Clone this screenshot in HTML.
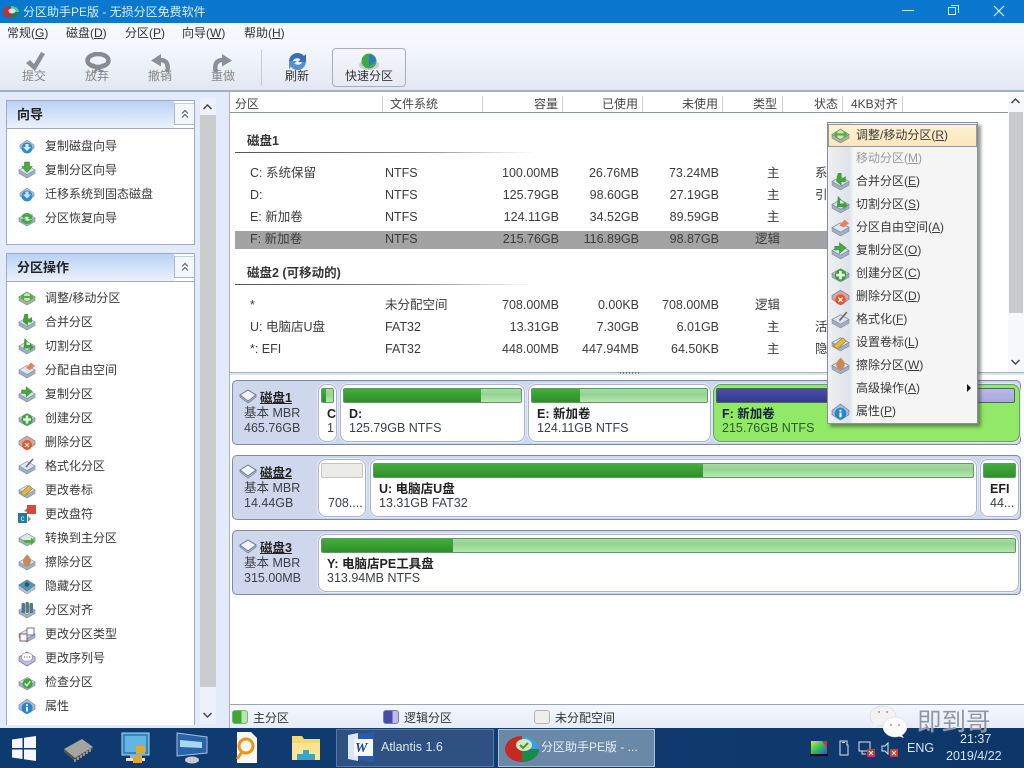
<!DOCTYPE html>
<html lang="zh"><head><meta charset="utf-8"><title>分区助手PE版</title>
<style>
html,body{margin:0;padding:0}
body{width:1024px;height:768px;overflow:hidden;position:relative;background:#e3eaf8;font:12px/16px "Liberation Sans","Noto Sans CJK SC",sans-serif;color:#333}
div,span,svg{position:absolute;box-sizing:border-box}
u{text-decoration:underline}
.t{white-space:nowrap}
.m{top:25px;height:16px;white-space:nowrap;color:#333}
.tb{top:68px;width:60px;text-align:center;color:#858585}
.p{left:6px;width:189px;background:#fff;border:1px solid #9fabc4}
.h{left:0;top:0;height:28px;width:167px;background:linear-gradient(#b9d1f5,#eef3fb);font-weight:bold;line-height:28px;padding-left:10px;color:#222;font-size:13px}
.hl{left:0;right:0;top:27px;height:1px;background:#9fabc4}
.b{left:167px;top:2px;width:20px;height:22px;background:#f3f7fd;border:1px solid #aab6cc;border-top-color:#c4cfe0;border-right:0}
.it{left:11px;height:24px;line-height:24px;padding-left:27px;white-space:nowrap;width:170px;color:#3a3a3a}
.it svg,.mi svg{left:0;top:3px;width:18px;height:18px}
.hd{top:96px;height:16px;white-space:nowrap;color:#444}
.sp{top:96px;width:1px;height:16px;background:#cdd3dd}
.r{white-space:nowrap;height:16px;color:#3c3c3c;font-size:12.5px}
.ra{text-align:right;width:90px}
.sh{left:247px;font-weight:bold;white-space:nowrap;font-size:12.5px;color:#333}
.ln{left:235px;width:300px;height:1px;background:linear-gradient(90deg,#555,#888 60%,#fff)}
.dk{left:232px;width:789px;height:65px;background:#ced7ec;border:1px solid #7f8ba0;border-radius:5px}
.pt{top:3px;height:58px;background:#fff;border:1px solid #aab4d2;border-radius:8px;box-shadow:0 0 0 1px #e4e9f6;overflow:hidden;white-space:nowrap}
.bar{left:2px;top:3px;height:15px;background:linear-gradient(#a5dca0,#96d292 40%,#b7e8b0);border:1px solid #5f9a60;border-radius:2px;overflow:hidden}
.fill{left:0;top:0;height:13px;background:linear-gradient(#43ad3d,#2f8f2b)}
.lb{white-space:nowrap;font-size:12.5px;color:#3c4048}
.lbb{white-space:nowrap;font-weight:bold;font-size:12.5px;color:#222}
.mi{left:0;width:148px;height:23px;line-height:23px;padding-left:28px;white-space:nowrap;color:#3a3a3a}
.mi svg{left:3px;top:2px;width:19px;height:19px}
.tk{top:728px}
</style></head><body>
<svg width="0" height="0" style="left:0;top:0">
<defs>
<g id="d"><path d="M1 9v3.500L9 17l8-4.500V9z" fill="#a3b0c4" stroke="#7c8ba3" stroke-width=".6"/><path d="M1 9l8-4.500L17 9l-8 4.500z" fill="#dde5f1" stroke="#7c8ba3" stroke-width=".7"/></g>
<g id="blue"><path d="M2 8L9 3l7 5v3l-7 5-7-5z" fill="#b9c5d8" stroke="#7c8ba3" stroke-width=".7"/><circle cx="9" cy="11" r="5.500" fill="#2f8dd0"/></g>
<symbol id="i1" viewBox="0 0 18 18"><use href="#blue"/><path d="M7.500 7h3v3H13l-4 4-4-4h2.500z" fill="#dcefff"/></symbol>
<symbol id="i2" viewBox="0 0 18 18"><use href="#d"/><path d="M6.500 1h5v4.500h3L9 11.500l-5.500-6h3z" fill="#47ad3d" stroke="#2a7a26" stroke-width=".5"/></symbol>
<symbol id="i3" viewBox="0 0 18 18"><use href="#blue"/><path d="M7.500 6.500h3v3H13l-4 4-4-4h2.500z" fill="#cbe6ff"/></symbol>
<symbol id="i4" viewBox="0 0 18 18"><use href="#d"/><path d="M3.500 8a5.500 4.500 0 0 1 10-2l1-1v5h-5l1.500-1.500a3 2.500 0 0 0-5 .8zM14.500 11a5.500 4.500 0 0 1-10 2l-1 1V9.500h5L7 11a3 2.500 0 0 0 5-.5z" fill="#48a940"/></symbol>
<symbol id="i5" viewBox="0 0 18 18"><path d="M1 8v3.500L9 16l8-4.500V8z" fill="#a4b89c" stroke="#78906c" stroke-width=".6"/><path d="M1 8l8-5 8 5-8 5z" fill="#cfe0be" stroke="#78906c" stroke-width=".8"/><path d="M2.500 8l3.500-3.500V7h6V4.500L15.500 8 12 11.500V9H6v2.500z" fill="#4cb43e"/></symbol>
<symbol id="i6" viewBox="0 0 18 18"><use href="#d"/><path d="M6.500 1H10v5.500L14 4v5.500H10V13L5 9V7z" fill="#43a03a"/></symbol>
<symbol id="i7" viewBox="0 0 18 18"><use href="#d"/><path d="M6.500 1l3.500 3.500H8.500V8H12V6l4 4-4 4v-2.500H5.500z" fill="#43a03a"/></symbol>
<symbol id="i8" viewBox="0 0 18 18"><use href="#d"/><path d="M8 7l5-5.500L17 5l-5 4z" fill="#e8805a"/></symbol>
<symbol id="i9" viewBox="0 0 18 18"><use href="#d"/><path d="M8 1.500l6.500 5L8 12V8.500H3.500v-3.500H8z" fill="#4aa83e" stroke="#2a7a26" stroke-width=".4"/></symbol>
<symbol id="i10" viewBox="0 0 18 18"><use href="#d"/><circle cx="9" cy="10.500" r="5.500" fill="#3f9e38"/><path d="M7.700 6.500h2.600v2.700H13v2.600h-2.700v2.700H7.700v-2.700H5V9.200h2.700z" fill="#e8f6e4"/></symbol>
<symbol id="i11" viewBox="0 0 18 18"><path d="M1 8l8-5 8 5v3.500L9 17l-8-5.500z" fill="#d0a8a8" stroke="#8f7c7c" stroke-width=".7"/><circle cx="9" cy="12" r="5" fill="#e5562d"/><path d="M7 10l4 4M11 10l-4 4" stroke="#fff" stroke-width="1.200"/></symbol>
<symbol id="i12" viewBox="0 0 18 18"><use href="#d"/><path d="M8 10l7-8" stroke="#666" stroke-width="1.500"/></symbol>
<symbol id="i13" viewBox="0 0 18 18"><use href="#d"/><path d="M2.500 12l8.500-7.500 3.500 3-8.500 8z" fill="#dcb84a" stroke="#9c7d20" stroke-width=".6"/></symbol>
<symbol id="i14" viewBox="0 0 18 18"><rect x="0" y="8" width="9" height="10" fill="#1f7da0"/><text x="2.500" y="16" font-size="8" fill="#fff" font-family="Liberation Sans">c</text><rect x="9" y="0" width="9" height="9" fill="#d8483a"/><path d="M6 6l3-3v4zM10 11l3 3-3 3z" fill="#888"/></symbol>
<symbol id="i15" viewBox="0 0 18 18"><use href="#d"/><path d="M5 11h8V8.500l4 4-4 4V14H7z" fill="#4cb040"/></symbol>
<symbol id="i16" viewBox="0 0 18 18"><use href="#d"/><path d="M9 1.500c3 2.500 4 4.500 4 6.500s-2 5-4 5-4-2.500-4-5S7 4 9 1.500z" fill="#c98a55"/></symbol>
<symbol id="i17" viewBox="0 0 18 18"><path d="M1 8v4l8 5 8-5V8z" fill="#b5c4d6" stroke="#7c8ba3" stroke-width=".5"/><path d="M1 8l8-5 8 5-8 6z" fill="#4d9ab0" stroke="#5b7e94" stroke-width=".8"/><circle cx="9" cy="7.500" r="2.300" fill="#205a74"/></symbol>
<symbol id="i18" viewBox="0 0 18 18"><use href="#d"/><rect x="3.500" y="2" width="3.500" height="10" rx="1" fill="#5c6eaa"/><rect x="7.500" y="1" width="3.500" height="11" rx="1" fill="#4e8a5c"/><rect x="11.500" y="2" width="3.500" height="10" rx="1" fill="#5c6eaa"/></symbol>
<symbol id="i19" viewBox="0 0 18 18"><use href="#d"/><rect x="2" y="9" width="7" height="7" fill="#fff" stroke="#844" stroke-width=".9"/><rect x="9" y="3" width="7" height="7" fill="#fff" stroke="#668" stroke-width=".9"/></symbol>
<symbol id="i20" viewBox="0 0 18 18"><path d="M1 8l8-5 8 5v4l-8 5-8-5z" fill="#c3bce0" stroke="#7e78a6" stroke-width=".8"/><rect x="3.500" y="4" width="11" height="8" rx="3.500" fill="#fff" stroke="#7e78a6" stroke-width=".6"/><path d="M6 8h1M8.500 8h1M11 8h1" stroke="#555"/></symbol>
<symbol id="i21" viewBox="0 0 18 18"><use href="#d"/><circle cx="9.500" cy="10.500" r="5" fill="#3fa538"/><path d="M6.800 10.500l2 2.200 3.400-4.300" stroke="#fff" stroke-width="1.400" fill="none"/></symbol>
<symbol id="i22" viewBox="0 0 18 18"><path d="M1 8l8-6 8 6v4l-8 5-8-5z" fill="#a9bdd6" stroke="#6b85a8" stroke-width=".7"/><circle cx="9" cy="11" r="5.500" fill="#2a86cc"/><rect x="8" y="10" width="2" height="4.500" fill="#fff"/><rect x="8" y="7.300" width="2" height="1.800" fill="#fff"/></symbol>
<symbol id="up" viewBox="0 0 12 12"><path d="M3 5.500L6 2.500l3 3M3 9.500L6 6.500l3 3" fill="none" stroke="#566" stroke-width="1.200"/></symbol>
</defs></svg>

<!-- title bar -->
<div style="left:0;top:0;width:1024px;height:23px;background:#0a78cf"></div>
<svg style="left:2px;top:4px" width="18" height="15" viewBox="0 0 18 15"><ellipse cx="9" cy="8" rx="8" ry="6" fill="#b33"/><path d="M9 2a8 6 0 0 1 8 6H9z" fill="#4c9"/><path d="M9 8h8a8 6 0 0 1-8 6z" fill="#2a7a50"/><ellipse cx="10" cy="7" rx="3.500" ry="2.500" fill="#cfe8ef"/></svg>
<div class="t" style="left:23px;top:4px;color:#d8eefb">分区助手PE版 - 无损分区免费软件</div>
<div style="left:902px;top:10px;width:12px;height:1px;background:#bfe6fa"></div>
<div style="left:948px;top:7px;width:8px;height:8px;border:1px solid #cdeefc"></div>
<div style="left:951px;top:5px;width:8px;height:8px;border:1px solid #cdeefc;border-left:0;border-bottom:0"></div>
<svg style="left:993px;top:5px" width="12" height="12"><path d="M1 1l10 10M11 1L1 11" stroke="#d6effb" stroke-width="1.200"/></svg>

<!-- menu + toolbar -->
<div style="left:0;top:23px;width:1024px;height:67px;background:linear-gradient(#f6fafe,#f3f6fc 40%,#e2e8f2)"></div>
<div style="left:0;top:90px;width:1024px;height:2px;background:#a3afc0"></div>
<div class="m" style="left:7px">常规(<u>G</u>)</div>
<div class="m" style="left:66px">磁盘(<u>D</u>)</div>
<div class="m" style="left:125px">分区(<u>P</u>)</div>
<div class="m" style="left:182px">向导(<u>W</u>)</div>
<div class="m" style="left:244px">帮助(<u>H</u>)</div>

<svg style="left:25px;top:51px" width="21" height="22"><path d="M1 12l4-3 4 4L16 1l4 2-10 17z" fill="#888e96"/></svg>
<svg style="left:85px;top:52px" width="26" height="22"><ellipse cx="13" cy="8.500" rx="10.500" ry="6.500" fill="none" stroke="#858b92" stroke-width="4.500"/><path d="M8 12l9 8M18 12l-9 8" stroke="#858b92" stroke-width="2.200"/></svg>
<svg style="left:149px;top:52px" width="22" height="21"><path d="M18 20c2-7 0-12-7-12" fill="none" stroke="#8b9098" stroke-width="4.500"/><path d="M12 2L2 8.500l10 6z" fill="#8b9098"/></svg>
<svg style="left:212px;top:52px" width="22" height="21"><path d="M4 20C2 13 4 8 11 8" fill="none" stroke="#8b9098" stroke-width="4.500"/><path d="M10 2l10 6.500-10 6z" fill="#8b9098"/></svg>
<svg style="left:287px;top:51px" width="21" height="21"><path d="M2 10a8.500 8.500 0 0 1 15-5l2-2v8h-8l2.500-2.500a5 5 0 0 0-8 2z" fill="#3a6cb8"/><path d="M19 11a8.500 8.500 0 0 1-15 5l-2 2v-8h8l-2.500 2.500a5 5 0 0 0 8-2z" fill="#5b8fd4"/></svg>
<div class="tb" style="left:4px">提交</div><div class="tb" style="left:67px">放弃</div><div class="tb" style="left:130px">撤销</div><div class="tb" style="left:193px">重做</div>
<div style="left:261px;top:50px;width:1px;height:36px;background:#c4cad4"></div>
<div class="tb" style="left:267px;color:#333">刷新</div>
<div style="left:332px;top:48px;width:74px;height:39px;border:1px solid #a8adb6;border-radius:4px;background:linear-gradient(#f4f6fa,#e6eaf2)"></div>
<svg style="left:358px;top:52px" width="22" height="18"><ellipse cx="11" cy="13" rx="10" ry="5" fill="#c6cbd4"/><circle cx="11" cy="9" r="7.500" fill="#3fa94a"/><path d="M11 3a7 7 0 0 1 7 6l-7 5z" fill="#2f78c8"/></svg>
<div class="tb" style="left:339px;color:#333">快速分区</div>

<!-- left panels -->
<div style="left:0;top:92px;width:229px;height:636px;background:#e3eaf9"></div>
<div class="p" style="top:100px;height:145px">
<div class="h">向导</div><div class="hl"></div><div class="b"><svg style="left:4px;top:4px" width="12" height="12"><use href="#up"/></svg></div>
<div class="it" style="top:33px"><svg><use href="#i1"/></svg>复制磁盘向导</div>
<div class="it" style="top:57px"><svg><use href="#i2"/></svg>复制分区向导</div>
<div class="it" style="top:81px"><svg><use href="#i3"/></svg>迁移系统到固态磁盘</div>
<div class="it" style="top:105px"><svg><use href="#i4"/></svg>分区恢复向导</div>
</div>
<div class="p" style="top:253px;border-bottom:0;height:472px">
<div class="h">分区操作</div><div class="hl"></div><div class="b"><svg style="left:4px;top:4px" width="12" height="12"><use href="#up"/></svg></div>
<div class="it" style="top:32px"><svg><use href="#i5"/></svg>调整/移动分区</div>
<div class="it" style="top:56px"><svg><use href="#i6"/></svg>合并分区</div>
<div class="it" style="top:80px"><svg><use href="#i7"/></svg>切割分区</div>
<div class="it" style="top:104px"><svg><use href="#i8"/></svg>分配自由空间</div>
<div class="it" style="top:128px"><svg><use href="#i9"/></svg>复制分区</div>
<div class="it" style="top:152px"><svg><use href="#i10"/></svg>创建分区</div>
<div class="it" style="top:176px"><svg><use href="#i11"/></svg>删除分区</div>
<div class="it" style="top:200px"><svg><use href="#i12"/></svg>格式化分区</div>
<div class="it" style="top:224px"><svg><use href="#i13"/></svg>更改卷标</div>
<div class="it" style="top:248px"><svg><use href="#i14"/></svg>更改盘符</div>
<div class="it" style="top:272px"><svg><use href="#i15"/></svg>转换到主分区</div>
<div class="it" style="top:296px"><svg><use href="#i16"/></svg>擦除分区</div>
<div class="it" style="top:320px"><svg><use href="#i17"/></svg>隐藏分区</div>
<div class="it" style="top:344px"><svg><use href="#i18"/></svg>分区对齐</div>
<div class="it" style="top:368px"><svg><use href="#i19"/></svg>更改分区类型</div>
<div class="it" style="top:392px"><svg><use href="#i20"/></svg>更改序列号</div>
<div class="it" style="top:416px"><svg><use href="#i21"/></svg>检查分区</div>
<div class="it" style="top:440px"><svg><use href="#i22"/></svg>属性</div>
</div>
<div style="left:200px;top:98px;width:16px;height:626px;background:#edf1fa"></div>
<div style="left:200px;top:115px;width:16px;height:572px;background:#c9cbcd"></div>
<svg style="left:202px;top:103px" width="11" height="8"><path d="M1.500 6L5.500 2l4 4" fill="none" stroke="#444" stroke-width="1.500"/></svg>
<svg style="left:202px;top:711px" width="11" height="8"><path d="M1.500 2l4 4 4-4" fill="none" stroke="#444" stroke-width="1.500"/></svg>

<!-- main list -->
<div style="left:229px;top:92px;width:795px;height:636px;background:#fff;border-left:1px solid #a9b3c2"></div>
<div style="left:230px;top:112px;width:778px;height:1px;background:#8c97a3"></div>
<div class="hd" style="left:235px">分区</div>
<div class="hd" style="left:390px">文件系统</div>
<div class="hd" style="left:534px">容量</div>
<div class="hd" style="left:602px">已使用</div>
<div class="hd" style="left:682px">未使用</div>
<div class="hd" style="left:753px">类型</div>
<div class="hd" style="left:814px">状态</div>
<div class="hd" style="left:851px">4KB对齐</div>
<div class="sp" style="left:382px"></div><div class="sp" style="left:482px"></div><div class="sp" style="left:562px"></div><div class="sp" style="left:642px"></div><div class="sp" style="left:722px"></div><div class="sp" style="left:782px"></div><div class="sp" style="left:842px"></div><div class="sp" style="left:902px"></div>
<div style="left:1008px;top:92px;width:16px;height:280px;background:#f6f8fb"></div>
<div style="left:1009px;top:112px;width:14px;height:201px;background:#c9cbcd"></div>
<svg style="left:1010px;top:97px" width="11" height="8"><path d="M1.500 6L5.500 2l4 4" fill="none" stroke="#444" stroke-width="1.500"/></svg>
<svg style="left:1010px;top:358px" width="11" height="8"><path d="M1.500 2l4 4 4-4" fill="none" stroke="#444" stroke-width="1.500"/></svg>

<div class="sh" style="top:133px">磁盘1</div><div class="ln" style="top:152px"></div>
<div class="sh" style="top:265px">磁盘2 (可移动的)</div><div class="ln" style="top:284px"></div>
<div style="left:235px;top:231px;width:595px;height:18px;background:#a3a3a5"></div>

<div class="r" style="left:250px;top:165px">C: 系统保留</div><div class="r" style="left:385px;top:165px">NTFS</div><div class="r ra" style="left:469px;top:165px">100.00MB</div><div class="r ra" style="left:549px;top:165px">26.76MB</div><div class="r ra" style="left:629px;top:165px">73.24MB</div><div class="r" style="left:767px;top:165px">主</div><div class="r" style="left:815px;top:165px">系统</div>
<div class="r" style="left:250px;top:187px">D:</div><div class="r" style="left:385px;top:187px">NTFS</div><div class="r ra" style="left:469px;top:187px">125.79GB</div><div class="r ra" style="left:549px;top:187px">98.60GB</div><div class="r ra" style="left:629px;top:187px">27.19GB</div><div class="r" style="left:767px;top:187px">主</div><div class="r" style="left:815px;top:187px">引导</div>
<div class="r" style="left:250px;top:209px">E: 新加卷</div><div class="r" style="left:385px;top:209px">NTFS</div><div class="r ra" style="left:469px;top:209px">124.11GB</div><div class="r ra" style="left:549px;top:209px">34.52GB</div><div class="r ra" style="left:629px;top:209px">89.59GB</div><div class="r" style="left:767px;top:209px">主</div>
<div class="r" style="left:250px;top:231px">F: 新加卷</div><div class="r" style="left:385px;top:231px">NTFS</div><div class="r ra" style="left:469px;top:231px">215.76GB</div><div class="r ra" style="left:549px;top:231px">116.89GB</div><div class="r ra" style="left:629px;top:231px">98.87GB</div><div class="r" style="left:755px;top:231px">逻辑</div>
<div class="r" style="left:250px;top:297px">*</div><div class="r" style="left:385px;top:297px">未分配空间</div><div class="r ra" style="left:469px;top:297px">708.00MB</div><div class="r ra" style="left:549px;top:297px">0.00KB</div><div class="r ra" style="left:629px;top:297px">708.00MB</div><div class="r" style="left:755px;top:297px">逻辑</div>
<div class="r" style="left:250px;top:319px">U: 电脑店U盘</div><div class="r" style="left:385px;top:319px">FAT32</div><div class="r ra" style="left:469px;top:319px">13.31GB</div><div class="r ra" style="left:549px;top:319px">7.30GB</div><div class="r ra" style="left:629px;top:319px">6.01GB</div><div class="r" style="left:767px;top:319px">主</div><div class="r" style="left:815px;top:319px">活动</div>
<div class="r" style="left:250px;top:341px">*: EFI</div><div class="r" style="left:385px;top:341px">FAT32</div><div class="r ra" style="left:469px;top:341px">448.00MB</div><div class="r ra" style="left:549px;top:341px">447.94MB</div><div class="r ra" style="left:629px;top:341px">64.50KB</div><div class="r" style="left:767px;top:341px">主</div><div class="r" style="left:815px;top:341px">隐藏</div>

<!-- splitter -->
<div style="left:230px;top:372px;width:794px;height:3px;background:#dfe5ef;border-top:1px solid #a6b0c0"></div>
<div style="left:620px;top:372px;width:20px;height:2px;background:repeating-linear-gradient(90deg,#778 0 1px,transparent 1px 3px)"></div>

<!-- disk map -->
<div class="dk" style="top:380px">
<svg style="left:6px;top:8px" width="18" height="15"><path d="M1 6v2l8 6 8-6V6z" fill="#b8c4d8" stroke="#6c7a92" stroke-width=".7"/><path d="M1 6l8-5 8 5-8 6z" fill="#f2f5fb" stroke="#6c7a92"/></svg>
<div class="lbb" style="left:27px;top:9px"><u>磁盘1</u></div><div class="lb" style="left:11px;top:24px">基本 MBR</div><div class="lb" style="left:11px;top:39px">465.76GB</div>
<div class="pt" style="left:85px;width:19px"><div class="bar" style="width:13px"><div class="fill" style="width:4px"></div></div><div class="lbb" style="left:8px;top:21px">C</div><div class="lb" style="left:8px;top:35px">1</div></div>
<div class="pt" style="left:107px;width:185px"><div class="bar" style="width:179px"><div class="fill" style="width:137px"></div></div><div class="lbb" style="left:8px;top:21px">D:</div><div class="lb" style="left:8px;top:35px">125.79GB NTFS</div></div>
<div class="pt" style="left:295px;width:183px"><div class="bar" style="width:177px"><div class="fill" style="width:48px"></div></div><div class="lbb" style="left:8px;top:21px">E: 新加卷</div><div class="lb" style="left:8px;top:35px">124.11GB NTFS</div></div>
<div class="pt" style="left:480px;width:307px;background:#92e867;border-color:#66a070"><div class="bar" style="width:299px;background:linear-gradient(#bbb9e8,#a9a7dd);border-color:#486a60"><div class="fill" style="width:160px;background:linear-gradient(#4a4ea8,#353a90)"></div></div><div class="lbb" style="left:8px;top:21px;color:#123">F: 新加卷</div><div class="lb" style="left:8px;top:35px;color:#2a5a30">215.76GB NTFS</div></div>
</div>
<div class="dk" style="top:455px">
<svg style="left:6px;top:8px" width="18" height="15"><path d="M1 6v2l8 6 8-6V6z" fill="#b8c4d8" stroke="#6c7a92" stroke-width=".7"/><path d="M1 6l8-5 8 5-8 6z" fill="#f2f5fb" stroke="#6c7a92"/></svg>
<div class="lbb" style="left:27px;top:9px"><u>磁盘2</u></div><div class="lb" style="left:11px;top:24px">基本 MBR</div><div class="lb" style="left:11px;top:39px">14.44GB</div>
<div class="pt" style="left:85px;width:48px"><div class="bar" style="width:42px;background:#ebebe8;border-color:#c4c4c0"></div><div class="lb" style="left:9px;top:35px">708....</div></div>
<div class="pt" style="left:137px;width:607px"><div class="bar" style="width:601px"><div class="fill" style="width:329px"></div></div><div class="lbb" style="left:8px;top:21px">U: 电脑店U盘</div><div class="lb" style="left:8px;top:35px">13.31GB FAT32</div></div>
<div class="pt" style="left:747px;width:39px"><div class="bar" style="width:33px"><div class="fill" style="width:31px"></div></div><div class="lbb" style="left:9px;top:21px">EFI</div><div class="lb" style="left:9px;top:35px">44...</div></div>
</div>
<div class="dk" style="top:530px">
<svg style="left:6px;top:8px" width="18" height="15"><path d="M1 6v2l8 6 8-6V6z" fill="#b8c4d8" stroke="#6c7a92" stroke-width=".7"/><path d="M1 6l8-5 8 5-8 6z" fill="#f2f5fb" stroke="#6c7a92"/></svg>
<div class="lbb" style="left:27px;top:9px"><u>磁盘3</u></div><div class="lb" style="left:11px;top:24px">基本 MBR</div><div class="lb" style="left:11px;top:39px">315.00MB</div>
<div class="pt" style="left:85px;width:701px"><div class="bar" style="width:695px"><div class="fill" style="width:131px"></div></div><div class="lbb" style="left:8px;top:21px">Y: 电脑店PE工具盘</div><div class="lb" style="left:8px;top:35px">313.94MB NTFS</div></div>
</div>

<!-- legend -->
<div style="left:230px;top:704px;width:794px;height:24px;background:linear-gradient(#f4f7fd,#e6ecf8);border-top:1px solid #99a4b4"></div>
<div style="left:232px;top:710px;width:16px;height:14px;border-radius:3px;border:1px solid #7fb07a;background:linear-gradient(90deg,#3da836 60%,#b8e4ae 60%)"></div>
<div class="t" style="left:253px;top:710px">主分区</div>
<div style="left:383px;top:710px;width:16px;height:14px;border-radius:3px;border:1px solid #7a7ab0;background:linear-gradient(90deg,#4a4aa8 60%,#bcbce8 60%)"></div>
<div class="t" style="left:404px;top:710px">逻辑分区</div>
<div style="left:534px;top:710px;width:16px;height:14px;border-radius:3px;border:1px solid #b5b5b0;background:#eeeeea"></div>
<div class="t" style="left:555px;top:710px">未分配空间</div>

<!-- context menu -->
<div style="left:827px;top:122px;width:151px;height:302px;background:#f5f5f6;border:1px solid #8c9094;box-shadow:3px 3px 3px rgba(60,70,60,.55)">
<div style="left:0;top:0;width:25px;height:300px;background:linear-gradient(90deg,#eef0f3,#dfe3e8 85%,#f0f1f3)"></div>
<div style="left:0;top:1px;width:149px;height:23px;background:linear-gradient(#fdf2d4,#fbe7bb);border:1px solid #8e9aa0"></div>
<div class="mi" style="top:1px"><svg><use href="#i5"/></svg>调整/移动分区(<u>R</u>)</div>
<div class="mi" style="top:24px;color:#9a9a9a">移动分区(<u>M</u>)</div>
<div class="mi" style="top:47px"><svg><use href="#i6"/></svg>合并分区(<u>E</u>)</div>
<div class="mi" style="top:70px"><svg><use href="#i7"/></svg>切割分区(<u>S</u>)</div>
<div class="mi" style="top:93px"><svg><use href="#i8"/></svg>分区自由空间(<u>A</u>)</div>
<div class="mi" style="top:116px"><svg><use href="#i9"/></svg>复制分区(<u>O</u>)</div>
<div class="mi" style="top:139px"><svg><use href="#i10"/></svg>创建分区(<u>C</u>)</div>
<div class="mi" style="top:162px"><svg><use href="#i11"/></svg>删除分区(<u>D</u>)</div>
<div class="mi" style="top:185px"><svg><use href="#i12"/></svg>格式化(<u>F</u>)</div>
<div class="mi" style="top:208px"><svg><use href="#i13"/></svg>设置卷标(<u>L</u>)</div>
<div class="mi" style="top:231px"><svg><use href="#i16"/></svg>擦除分区(<u>W</u>)</div>
<div class="mi" style="top:254px">高级操作(<u>A</u>)</div>
<div style="left:139px;top:261px;width:0;height:0;border-left:4px solid #111;border-top:4px solid transparent;border-bottom:4px solid transparent"></div>
<div class="mi" style="top:277px"><svg><use href="#i22"/></svg>属性(<u>P</u>)</div>
</div>

<!-- taskbar -->
<div style="left:0;top:728px;width:1024px;height:40px;background:linear-gradient(90deg,#0e3a70,#103c72 50%,#0e3668)"></div>
<svg style="left:12px;top:736px" width="24" height="25"><path d="M0 3.500L10.500 2v10H0zM12 1.800L24 0v12H12zM0 13.500h10.500V23L0 21.500zM12 13.500h12V25l-12-1.800z" fill="#f4f8fc"/></svg>
<svg style="left:62px;top:737px" width="32" height="26"><path d="M2 12L20 2l11 8-18 11z" fill="#a5a5a0"/><path d="M2 12l11 9v3L2 15zM13 21l18-11v2L13 24z" fill="#55524c"/><path d="M13 22v3M16 20v3M19 18v3M22 16v3M25 14v3M28 12v3" stroke="#ddd" stroke-width="1"/></svg>
<svg style="left:121px;top:732px" width="29" height="32"><rect x="1" y="1" width="27" height="22" fill="#2d8ac4" stroke="#c4d8e4"/><rect x="4" y="4" width="21" height="16" fill="#62b6e4"/><rect x="9" y="23" width="11" height="3" fill="#aab"/><rect x="5" y="26" width="19" height="3" fill="#dde"/><rect x="15" y="14" width="9" height="8" fill="#e0a830"/><rect x="12" y="23" width="9" height="8" fill="#e0a830"/></svg>
<svg style="left:176px;top:731px" width="32" height="34"><path d="M1 2l30 4v16L1 25z" fill="#2a62a8" stroke="#a4bcd8"/><path d="M4 9l22 2v6L4 16z" fill="#a8d8f0"/><ellipse cx="16" cy="29" rx="7" ry="3.500" fill="#c8ccd0"/></svg>
<svg style="left:235px;top:731px" width="24" height="34"><path d="M2 1h14l6 6v25H2z" fill="#faf8f0"/><circle cx="11" cy="15" r="7" fill="none" stroke="#e8961c" stroke-width="3"/><path d="M7 21l-5 7" stroke="#e8961c" stroke-width="3"/></svg>
<svg style="left:291px;top:735px" width="30" height="26"><path d="M1 1h10l2 3h16v21H1z" fill="#f6d873"/><rect x="1" y="8" width="28" height="17" fill="#fbe493"/><path d="M6 25v-6h18v6zM12 19v-4h6v4z" fill="#35a8c8"/></svg>
<div style="left:336px;top:729px;width:158px;height:38px;background:#2e5182;border:1px solid #5a7aa4"></div>
<svg style="left:345px;top:731px" width="31" height="33"><path d="M3 4l26-3v30L3 28z" fill="#2a5aa8"/><path d="M3 4l10-2v28L3 28z" fill="#dce6f4"/><rect x="9" y="8" width="19" height="17" fill="#f4f7fc"/><text x="10" y="21" font-size="14" font-weight="bold" font-style="italic" fill="#23468c" font-family="Liberation Serif">W</text></svg>
<div class="t" style="left:381px;top:739px;color:#dbe6f2;font-size:12.500px">Atlantis 1.6</div>
<div style="left:498px;top:729px;width:157px;height:38px;background:#6a88a8;border:1px solid #a8c0d4"></div>
<svg style="left:505px;top:733px" width="34" height="30"><ellipse cx="17" cy="16" rx="17" ry="13" fill="#c42a22"/><path d="M17 3a17 13 0 0 1 17 13H17z" fill="#3da0d8"/><path d="M17 16h17a17 13 0 0 1-17 13z" fill="#1a8a4a"/><ellipse cx="19" cy="12" rx="8" ry="6" fill="#d6e8c0"/><path d="M15 12l3 3 5-5" stroke="#3a9a3a" stroke-width="2" fill="none"/></svg>
<div class="t" style="left:541px;top:739px;color:#e6eef6">分区助手PE版 - ...</div>

<!-- tray -->
<svg style="left:810px;top:740px" width="18" height="17"><defs><linearGradient id="cg" x1="0" x2="1" y1="0" y2="1"><stop offset="0" stop-color="#e8e030"/><stop offset=".5" stop-color="#30c060"/><stop offset="1" stop-color="#3050d0"/></linearGradient></defs><rect x="1" y="1" width="16" height="13" fill="url(#cg)"/><path d="M12 1h5v8z" fill="#d03050"/><rect y="14" width="18" height="2" fill="#111"/></svg>
<svg style="left:837px;top:740px" width="16" height="17"><path d="M3 1h7v4h1v10H3V5h0z" fill="none" stroke="#dbe6f2"/><path d="M5 2.500h3" stroke="#dbe6f2"/></svg>
<svg style="left:858px;top:741px" width="18" height="16"><rect x="1" y="1" width="11" height="9" fill="none" stroke="#dbe6f2"/><path d="M4 10v3h4" stroke="#dbe6f2" fill="none"/><rect x="9" y="8" width="8" height="8" fill="#d2353a"/><path d="M11 10l4 4M15 10l-4 4" stroke="#fff"/></svg>
<svg style="left:881px;top:741px" width="18" height="16"><path d="M1 5h3l3-3v11l-3-3H1z" fill="none" stroke="#dbe6f2"/><rect x="9" y="8" width="8" height="8" fill="#d2353a"/><path d="M11 10l4 4M15 10l-4 4" stroke="#fff"/></svg>
<div class="t" style="left:907px;top:740px;color:#dbe6f2;font-size:12.500px">ENG</div>
<div class="t" style="left:960px;top:731px;color:#d5e2f0;font-size:12.500px">21:37</div>
<div class="t" style="left:946px;top:748px;color:#d5e2f0;font-size:12.500px">2019/4/22</div>

<!-- watermark -->
<svg style="left:868px;top:703px" width="42" height="36"><ellipse cx="15" cy="13" rx="13" ry="10" fill="#f2f2f2" stroke="#cfcfcf" stroke-width=".5"/><path d="M6 20l-2 5 6-3z" fill="#f2f2f2"/><ellipse cx="27" cy="24" rx="12" ry="10" fill="#fdfdfd" stroke="#cfcfcf" stroke-width=".5"/><path d="M33 31l3 4-6-2z" fill="#fff"/><circle cx="11" cy="9" r="1" fill="#999"/><circle cx="19" cy="9" r="1" fill="#999"/><circle cx="23" cy="22" r="1" fill="#999"/><circle cx="31" cy="22" r="1" fill="#999"/></svg>
<div class="t" style="left:917px;top:708px;height:30px;font-size:24.500px;line-height:30px;color:#8d97a6;text-shadow:0 0 1px #fff">即到哥</div>
</body></html>
